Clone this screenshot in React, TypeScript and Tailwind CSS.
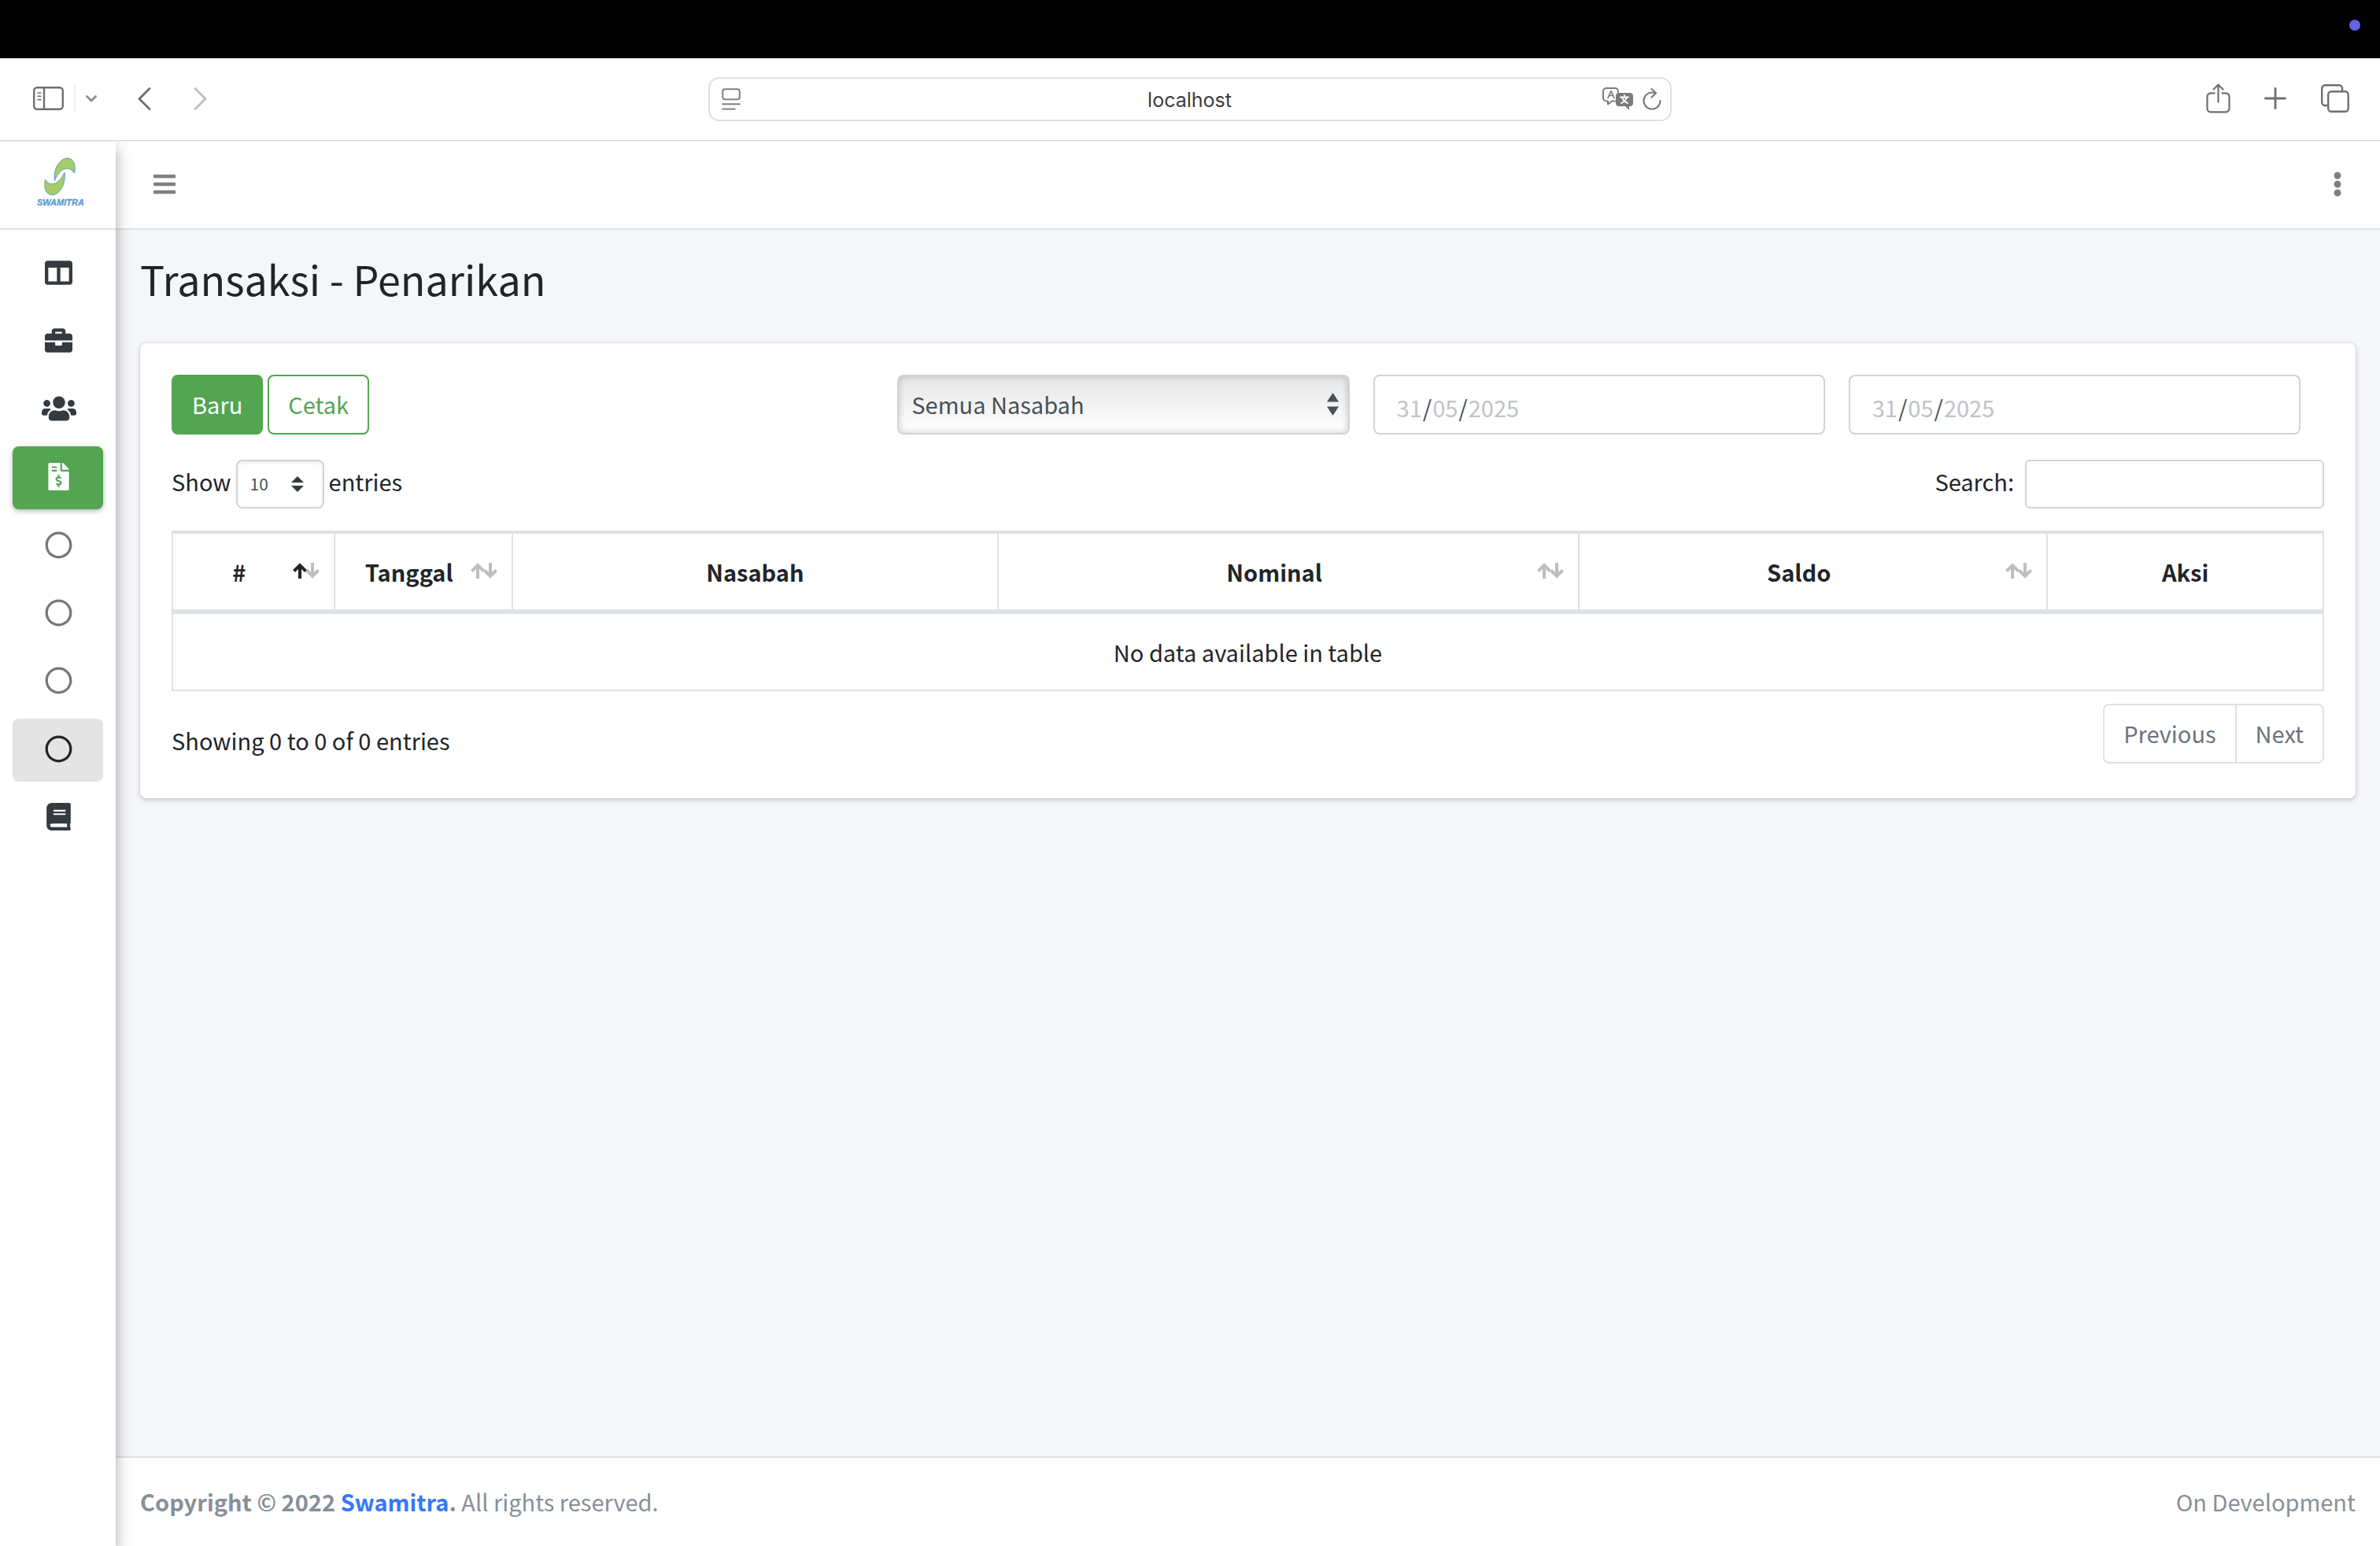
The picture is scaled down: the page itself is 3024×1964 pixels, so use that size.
import type { ReactNode } from "react";
import {
  FaBars,
  FaBook,
  FaBriefcase,
  FaColumns,
  FaEllipsisV,
  FaFileInvoiceDollar,
  FaRegCircle,
  FaUsers,
} from "react-icons/fa";

const toolbarIcon = {
  fill: "none",
  stroke: "currentColor",
  strokeLinecap: "round" as const,
  strokeLinejoin: "round" as const,
};

function BrowserBar() {
  return (
    <div className="grid h-[105px] grid-cols-[1fr_1224px_1fr] items-center border-b border-[#d6d6d6] bg-white text-[#6f6f6f]">
      <div className="flex items-center pb-[2px] pl-[42px]">
        <button aria-label="Show sidebar">
          <svg width="39" height="30" viewBox="0 0 39 30" {...toolbarIcon} strokeWidth="2.4">
            <rect x="1.2" y="1.2" width="36.6" height="27.6" rx="4" />
            <path d="M14 1.5v27" />
            <path d="M6 8h4M6 12.3h4M6 16.6h4" strokeWidth="1.6" />
          </svg>
        </button>
        <span className="ml-[13px] h-9 w-[2px] bg-[#f0f0f0]" />
        <button aria-label="Tab groups" className="ml-[13px] text-[#8a8a8e]">
          <svg width="14" height="9" viewBox="0 0 14 9" {...toolbarIcon} strokeWidth="2.8">
            <path d="M1.5 1.5 7 7l5.5-5.5" />
          </svg>
        </button>
        <button aria-label="Back" className="ml-[52px]">
          <svg width="17" height="29" viewBox="0 0 17 29" {...toolbarIcon} strokeWidth="2.8">
            <path d="M15 1.5 2 14.5l13 13" />
          </svg>
        </button>
        <button aria-label="Forward" className="ml-[54px] text-[#bdbdbd]">
          <svg width="17" height="29" viewBox="0 0 17 29" {...toolbarIcon} strokeWidth="2.8">
            <path d="M2 1.5 15 14.500l-13 13" />
          </svg>
        </button>
      </div>

      <div className="flex h-14 items-center rounded-[14px] border-2 border-[#e0e0e0] pr-[11px] pl-[15px]">
        <button aria-label="Page menu" className="w-[72px] text-[#808080]">
          <svg width="24" height="28" viewBox="0 0 24 28" {...toolbarIcon} strokeWidth="2">
            <rect x="1.2" y="1.2" width="21.600" height="13" rx="3" />
            <path d="M1.2 20.2h21.6M1.2 26.5h15.500" />
          </svg>
        </button>
        <input
          aria-label="Address"
          defaultValue="localhost"
          className="min-w-0 flex-1 bg-transparent pt-px text-center font-['Inter',sans-serif] text-[25px] leading-9 text-[#3c3c3c] outline-none"
        />
        <div className="flex w-[77px] items-center justify-end gap-[11px] text-[#7b7b7b]">
          <button aria-label="Translate">
            <svg width="40" height="30" viewBox="0 0 40 30" {...toolbarIcon} strokeWidth="2">
              <path d="M16 17.5h-4L7 21.500v-4H5a4 4 0 0 1-4-4V5a4 4 0 0 1 4-4h11a4 4 0 0 1 4 4v1" />
              <path d="M7 13.500 11 4.500l4 9M8.500 10.500h5" strokeWidth="1.700" />
              <path d="M21 7h14a4 4 0 0 1 4 4v9a4 4 0 0 1-4 4h-1v5l-5-5h-8a4 4 0 0 1-4-4v-9a4 4 0 0 1 4-4z" fill="currentColor" stroke="none" />
              <path d="M23 12.500h10M28 10v2.500M31 12.500c-1 3.500-4 6-7 7.500M25 12.500c1 3.500 4 6 7 7.500" stroke="#fff" strokeWidth="1.800" />
            </svg>
          </button>
          <button aria-label="Reload">
            <svg width="24" height="28" viewBox="0 0 24 28" {...toolbarIcon} strokeWidth="2.200">
              <path d="M22.500 16A10.500 10.500 0 1 1 12 5.500q2.500 0 4.500.5" />
              <path d="M11.500 1 17 6.200l-5.500 5.300" />
            </svg>
          </button>
        </div>
      </div>

      <div className="flex items-center justify-end pr-[39px] pb-[2px]">
        <button aria-label="Share">
          <svg width="31" height="38" viewBox="0 0 31 38" {...toolbarIcon} strokeWidth="2.200">
            <path d="M10.500 12.300H6a4.500 4.500 0 0 0-4.500 4.500v15A4.500 4.500 0 0 0 6 36.300h19a4.500 4.500 0 0 0 4.500-4.500v-15a4.500 4.500 0 0 0-4.500-4.500h-4.500" />
            <path d="M15.500 23.500v-22M9.500 7.500l6-6 6 6" />
          </svg>
        </button>
        <button aria-label="New tab" className="ml-[43px]">
          <svg width="28" height="28" viewBox="0 0 28 28" {...toolbarIcon} strokeWidth="2.800">
            <path d="M14 1.500v25M1.500 14h25" />
          </svg>
        </button>
        <button aria-label="Tab overview" className="ml-11">
          <svg width="36" height="36" viewBox="0 0 36 36" {...toolbarIcon} strokeWidth="2.400">
            <path d="M8 27H5.200a4 4 0 0 1-4-4V5.200a4 4 0 0 1 4-4H23a4 4 0 0 1 4 4V8" />
            <rect x="9.200" y="9.200" width="25.500" height="25.500" rx="4" />
          </svg>
        </button>
      </div>
    </div>
  );
}

function Logo() {
  return (
    <svg width="60" height="64" viewBox="0 0 60 64" role="img" aria-label="Swamitra">
      <g fill="#a5cd68" stroke="#5b9fb0" strokeWidth="1">
        <path d="M23.500 29.500C21 14 31 .5 40 1c8 .5 10.500 9 8.500 19-6-9.500-18-8.500-25 9.500z" />
        <path d="M36 19c2 16-7 29-16 28.500C12 47 9.500 38 11.500 28c5 9 17 8 24.500-9z" />
      </g>
      <text x="1" y="61" fill="#5a9bce" stroke="#5a9bce" strokeWidth="0.3" fontFamily="Liberation Sans, sans-serif" fontSize="11" fontWeight="700" fontStyle="italic">
        SWAMITRA
      </text>
    </svg>
  );
}

const navItems: { label: string; icon: ReactNode; state: string }[] = [
  { label: "Dashboard", icon: <FaColumns />, state: "text-[35px] text-[#343a40]" },
  { label: "Master", icon: <FaBriefcase />, state: "text-[35px] text-[#343a40]" },
  { label: "Nasabah", icon: <FaUsers />, state: "text-[44px] text-[#343a40]" },
  { label: "Transaksi", icon: <FaFileInvoiceDollar />, state: "bg-[#53a551] text-[35px] text-white shadow-[0_2px_6px_rgba(0,0,0,0.3)]" },
  { label: "Simpanan", icon: <FaRegCircle />, state: "text-[35px] text-[#777777]" },
  { label: "Pinjaman", icon: <FaRegCircle />, state: "text-[35px] text-[#777777]" },
  { label: "Angsuran", icon: <FaRegCircle />, state: "text-[35px] text-[#777777]" },
  { label: "Penarikan", icon: <FaRegCircle />, state: "bg-[#e4e4e4] text-[35px] text-[#212529]" },
  { label: "Laporan", icon: <FaBook />, state: "text-[35px] text-[#343a40]" },
];

function Sidebar() {
  return (
    <aside className="z-10 w-[147px] shrink-0 bg-white shadow-[0_8px_18px_rgba(0,0,0,0.35)]">
      <a href="#" className="flex h-28 items-start justify-center border-b-2 border-[#dee2e6] pt-5 pl-1">
        <Logo />
      </a>
      <nav className="flex h-[803px] flex-col justify-between p-4">
        {navItems.map((item) => (
          <a
            key={item.label}
            href="#"
            aria-label={item.label}
            className={`flex h-20 items-center justify-center rounded-lg pb-[3px] pl-[2px] ${item.state}`}
          >
            {item.icon}
          </a>
        ))}
      </nav>
    </aside>
  );
}

function SortArrows({ ascending }: { ascending?: boolean }) {
  return (
    <svg width="34" height="20" viewBox="0 0 34 20" fill="none" strokeWidth="4" className="absolute top-[37px] right-[18px]">
      <path d="M25 0v17M17.500 9.500l7.500 7.500 7.500-7.500" stroke="#bdbebf" />
      <path d="M9 20V3M1.500 10.500 9 3l7.500 7.500" stroke={ascending ? "#212529" : "#bdbebf"} />
    </svg>
  );
}

const columns = [
  { title: "#", sort: "asc", width: "w-[7.53%]" },
  { title: "Tanggal", sort: "both", width: "w-[8.26%]" },
  { title: "Nasabah", sort: "", width: "w-[22.6%]" },
  { title: "Nominal", sort: "both", width: "w-[27%]" },
  { title: "Saldo", sort: "both", width: "w-[21.78%]" },
  { title: "Aksi", sort: "", width: "w-[12.83%]" },
];

function DataTable() {
  return (
    <table className="mt-7 w-full table-fixed border-separate border-spacing-0 border-l-2 border-[#dee2e6] text-center">
      <thead>
        <tr>
          {columns.map((c) => (
            <th
              key={c.title}
              className={`relative h-[106px] border-t-4 border-r-2 border-b-[6px] border-[#dee2e6] font-bold ${c.width} ${c.sort ? "pr-[60px] pl-6" : "px-6"}`}
            >
              {c.title}
              {c.sort && <SortArrows ascending={c.sort === "asc"} />}
            </th>
          ))}
        </tr>
      </thead>
      <tbody>
        <tr>
          <td colSpan={6} className="h-[98px] border-r-2 border-b-2 border-[#dee2e6]">
            No data available in table
          </td>
        </tr>
      </tbody>
    </table>
  );
}

function DateField({ label }: { label: string }) {
  const part = "field-sizing-content bg-transparent outline-none placeholder:text-[#bfc3c8]";
  return (
    <div
      role="group"
      aria-label={label}
      className="flex h-[76px] items-center gap-px rounded-lg border-2 border-[#ced4da] px-7 pt-[6px] text-[#495057]"
    >
      <input aria-label="Day" placeholder="31" className={part} />
      <span>/</span>
      <input aria-label="Month" placeholder="05" className={part} />
      <span>/</span>
      <input aria-label="Year" placeholder="2025" className={part} />
    </div>
  );
}

function Arrows({ className, tall }: { className: string; tall?: boolean }) {
  return tall ? (
    <svg width="15" height="29" viewBox="0 0 15 29" fill="#495057" className={className}>
      <path d="M0 11.500 7.500 0 15 11.500zM0 17.500h15L7.500 29z" />
    </svg>
  ) : (
    <svg width="16" height="20" viewBox="0 0 16 20" fill="#343a40" className={className}>
      <path d="M0 8 8 0l8 8zM0 12h16l-8 8z" />
    </svg>
  );
}

function Card() {
  return (
    <section className="mt-[50px] rounded-lg bg-white p-10 pb-11 shadow-[0_0_2px_rgba(0,0,0,0.125),0_2px_6px_rgba(0,0,0,0.2)]">
      <div className="grid grid-cols-[1fr_2fr] gap-4">
        <div className="flex gap-[6px]">
          <button className="h-[76px] rounded-lg bg-[#53a551] px-[26px] pb-[2px] text-white">Baru</button>
          <button className="h-[76px] rounded-lg border-2 border-[#53a551] px-6 pb-[2px] text-[#53a551]">Cetak</button>
        </div>
        <div className="grid grid-cols-3 gap-[30px] pr-[30px]">
          <div className="relative">
            <select
              aria-label="Nasabah"
              className="h-[76px] w-full appearance-none rounded-lg border-2 border-[#ced4da] bg-linear-to-b from-[#e6e6e6] to-white px-4 pb-[3px] text-[#495057] shadow-[inset_0_0_10px_rgba(0,0,0,0.2)]"
            >
              <option>Semua Nasabah</option>
            </select>
            <Arrows tall className="pointer-events-none absolute top-[23px] right-[14px]" />
          </div>
          <DateField label="Tanggal awal" />
          <DateField label="Tanggal akhir" />
        </div>
      </div>

      <div className="mt-8 flex items-center justify-between">
        <label className="flex items-start gap-[6px]">
          <span className="pt-[3px]">Show</span>
          <span className="relative">
            <select className="block h-[62px] w-28 appearance-none rounded-lg border-2 border-[#ced4da] bg-white px-4 pb-[2px] text-[21px] text-[#495057] shadow-[inset_0_2px_4px_rgba(0,0,0,0.08)]">
              <option>10</option>
            </select>
            <Arrows className="pointer-events-none absolute top-[21px] right-[26px]" />
          </span>
          <span className="pt-[3px]">entries</span>
        </label>
        <label className="flex items-start gap-[14px]">
          <span className="pt-[3px]">Search:</span>
          <input type="search" className="h-[62px] w-[380px] rounded-md border-2 border-[#ced4da] px-4 outline-none" />
        </label>
      </div>

      <DataTable />

      <div className="mt-4 flex items-start justify-between">
        <p className="pt-[22px] leading-[48px]">Showing 0 to 0 of 0 entries</p>
        <div className="flex h-[76px] rounded-lg border-2 border-[#dee2e6] text-[#6c757d]">
          <button className="border-r-2 border-[#dee2e6] px-6 pb-[2px]">Previous</button>
          <button className="px-6 pb-[2px]">Next</button>
        </div>
      </div>
    </section>
  );
}

export default function App() {
  return (
    <div className="flex min-h-screen flex-col bg-[#f4f6f9] font-['Noto_Sans_CJK_JP',sans-serif] text-[29px] leading-[48px] text-[#212529]">
      <div className="flex h-[74px] items-start justify-end bg-black pt-[25px] pr-[25px]">
        <span className="size-[14px] rounded-full bg-[#6461ea]" />
      </div>
      <BrowserBar />
      <div className="flex flex-1 overflow-hidden pt-px">
        <Sidebar />
        <div className="flex min-w-0 flex-1 flex-col">
          <header className="flex h-28 items-center justify-between border-b-2 border-[#dee2e6] bg-white pr-[38px] pb-[2px] pl-[46px] text-[32px] text-[#808080]">
            <button aria-label="Toggle menu">
              <FaBars />
            </button>
            <button aria-label="More">
              <FaEllipsisV />
            </button>
          </header>
          <main className="flex-1 px-[31px] pt-[30px]">
            <h1 className="text-[52px] leading-[64px]">Transaksi - Penarikan</h1>
            <Card />
          </main>
          <footer className="flex h-[114px] items-center justify-between border-t-2 border-[#dee2e6] bg-white px-[31px] pb-[2px] text-[#869099]">
            <p>
              <strong>
                Copyright © 2022{" "}
                <a href="#" className="text-[#3478f6]">
                  Swamitra
                </a>
                .
              </strong>{" "}
              All rights reserved.
            </p>
            <p>On Development</p>
          </footer>
        </div>
      </div>
    </div>
  );
}
